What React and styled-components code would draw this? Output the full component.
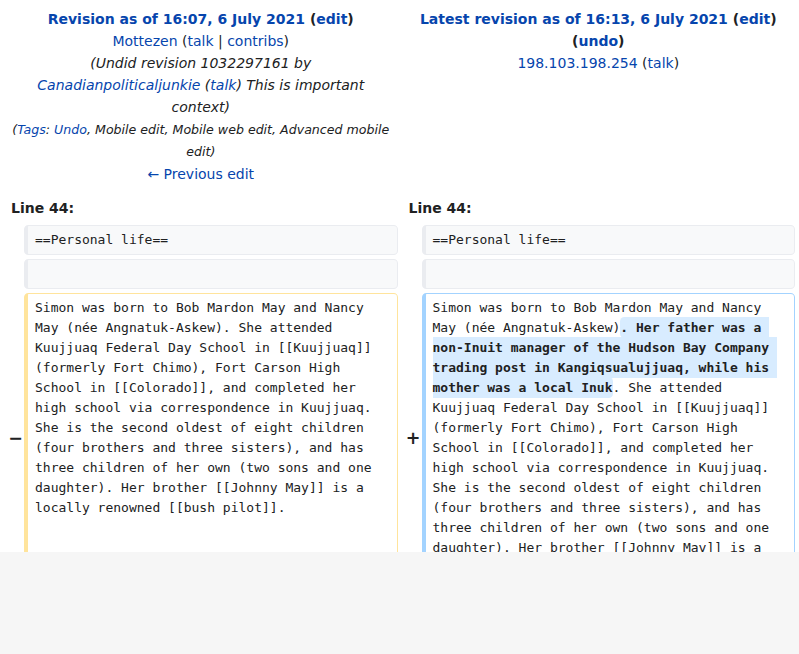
import { createGlobalStyle, styled } from 'styled-components'

const GlobalStyle = createGlobalStyle`
  html, body {
    margin: 0;
    padding: 0;
    background: #f6f6f6;
  }
  body {
    font-family: "DejaVu Sans", "Noto Sans", sans-serif;
    font-size: 14px;
    color: #202122;
  }
`

const Page = styled.div`
  height: 552px;
  overflow: hidden;
  background: #fff;
`

const DiffGrid = styled.div`
  display: grid;
  grid-template-columns: 24px minmax(0, 1fr) 24px minmax(0, 1fr);
  row-gap: 4px;
  padding: 4px 4px 0 0;
`

const Title = styled.div`
  grid-column: ${p => (p.$side === 'new' ? '3 / 5' : '1 / 3')};
  margin-left: 4px;
  padding: 4px 7px 3px;
  text-align: center;
  line-height: 22px;
`

const Link = styled.a`
  color: #0645ad;
  text-decoration: none;
`

const Comment = styled.span`
  font-style: italic;
`

const Tags = styled.div`
  margin-top: 1px;
  font-style: italic;
  font-size: 90%;
`

const LineNo = styled.div`
  grid-column: ${p => (p.$side === 'new' ? '3 / 5' : '1 / 3')};
  margin-left: 4px;
  padding: 5px 7px 2px;
  font-weight: bold;
  line-height: 22px;
`

const Marker = styled.div`
  align-self: center;
  text-align: right;
  padding-right: 1px;
  font-weight: bold;
  font-size: 17.5px;
  line-height: 1.2;
`

const borderColors = {
  context: '#eaecf0',
  deleted: '#ffe49c',
  added: '#a3d3ff',
}

const Cell = styled.div`
  font-family: "DejaVu Sans Mono", "Liberation Mono", monospace;
  font-size: 13px;
  line-height: 20px;
  padding: 4px 7px;
  white-space: pre-wrap;
  overflow-wrap: break-word;
  border-style: solid;
  border-width: 1px 1px 1px 4px;
  border-radius: 0.33em;
  border-color: ${p => borderColors[p.$kind]};
  background: ${p => (p.$kind === 'context' ? '#f8f9fa' : '#fff')};
  color: #202122;
`

const Change = styled.ins`
  font-weight: bold;
  text-decoration: none;
  background: #d8ecff;
  border-radius: 0.33em;
  padding: 0.25em 0;
`

const before = 'Simon was born to Bob Mardon May and Nancy May (née Angnatuk-Askew)'
const after =
  '. She attended Kuujjuaq Federal Day School in [[Kuujjuaq]] (formerly Fort Chimo), Fort Carson High School in [[Colorado]], and completed her high school via correspondence in Kuujjuaq. She is the second oldest of eight children (four brothers and three sisters), and has three children of her own (two sons and one daughter). Her brother [[Johnny May]] is a locally renowned [[bush pilot]].'
const inserted =
  '. Her father was a non-Inuit manager of the Hudson Bay Company trading post in Kangiqsualujjuaq, while his mother was a local Inuk'

const ContextRow = ({ children }) => (
  <>
    <Marker />
    <Cell $kind="context">{children}</Cell>
    <Marker />
    <Cell $kind="context">{children}</Cell>
  </>
)

export default function App() {
  return (
    <Page>
      <GlobalStyle />
      <DiffGrid>
        <Title>
          <div>
            <strong>
              <Link href="#">Revision as of 16:07, 6 July 2021</Link> (<Link href="#">edit</Link>)
            </strong>
          </div>
          <div>
            <Link href="#">Mottezen</Link> (<Link href="#">talk</Link> | <Link href="#">contribs</Link>)
          </div>
          <div>
            <Comment>
              (Undid revision 1032297161 by <Link href="#">Canadianpoliticaljunkie</Link> (
              <Link href="#">talk</Link>) This is important context)
            </Comment>
          </div>
          <Tags>
            (<Link href="#">Tags</Link>: <Link href="#">Undo</Link>, Mobile edit, Mobile web edit, Advanced mobile edit)
          </Tags>
          <div>
            <Link href="#">← Previous edit</Link>
          </div>
        </Title>
        <Title $side="new">
          <div>
            <strong>
              <Link href="#">Latest revision as of 16:13, 6 July 2021</Link> (<Link href="#">edit</Link>) (
              <Link href="#">undo</Link>)
            </strong>
          </div>
          <div>
            <Link href="#">198.103.198.254</Link> (<Link href="#">talk</Link>)
          </div>
        </Title>

        <LineNo>Line 44:</LineNo>
        <LineNo $side="new">Line 44:</LineNo>

        <ContextRow>==Personal life==</ContextRow>
        <ContextRow>
          <br />
        </ContextRow>

        <Marker>−</Marker>
        <Cell $kind="deleted">
          {before}
          {after}
        </Cell>
        <Marker>+</Marker>
        <Cell $kind="added">
          {before}
          <Change>{inserted}</Change>
          {after}
        </Cell>
      </DiffGrid>
    </Page>
  )
}
